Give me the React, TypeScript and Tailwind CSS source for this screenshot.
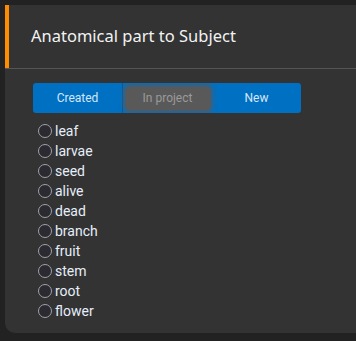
const parts = ["leaf", "larvae", "seed", "alive", "dead", "branch", "fruit", "stem", "root", "flower"];

export default function App() {
  return (
    <div className="min-h-[341px] w-[356px] overflow-hidden bg-[#222222] pl-[5px] pt-[5px]">
      <div className="h-[328px] w-[370px] rounded-bl-[10px] bg-[#333333]">
        <div className="flex h-[64px] items-center border-b border-[#555555]">
          <div className="h-full w-[4px] bg-[#ff8c00]" />
          <h1
            className="pl-[22px] text-[16.5px] text-[#f2f2f2]"
            style={{ fontFamily: '"Noto Sans", sans-serif' }}
          >
            Anatomical part to Subject
          </h1>
        </div>

        <div className="pl-[28px] pt-[14px]" style={{ fontFamily: "Roboto, sans-serif" }}>
          <div className="flex h-[30px] w-[268px] overflow-hidden rounded-[3px] bg-[#0070c2] text-[12px]">
            <button className="flex w-[90px] items-center justify-center border-r border-[#005a9e] text-[#d6e6f7]">
              Created
            </button>
            <div className="flex w-[89px] items-center justify-center">
              <span className="flex h-[23px] w-[84px] items-center justify-center rounded-[3px] bg-[#595959] text-[#9a9a9a] shadow-[0_0_5px_2px_#595959]">
                In project
              </span>
            </div>
            <button className="flex flex-1 items-center justify-center text-[#d6e6f7]">New</button>
          </div>

          <ul className="pt-[8px] pl-[5px]">
            {parts.map((p) => (
              <li key={p} className="flex h-[20px] items-center gap-[3px] text-[14px] text-[#e6eefa]">
                <span className="h-[14px] w-[14px] rounded-full border border-[#a0a0a8] bg-[#2a2a30]" />
                {p}
              </li>
            ))}
          </ul>
        </div>
      </div>
    </div>
  );
}
